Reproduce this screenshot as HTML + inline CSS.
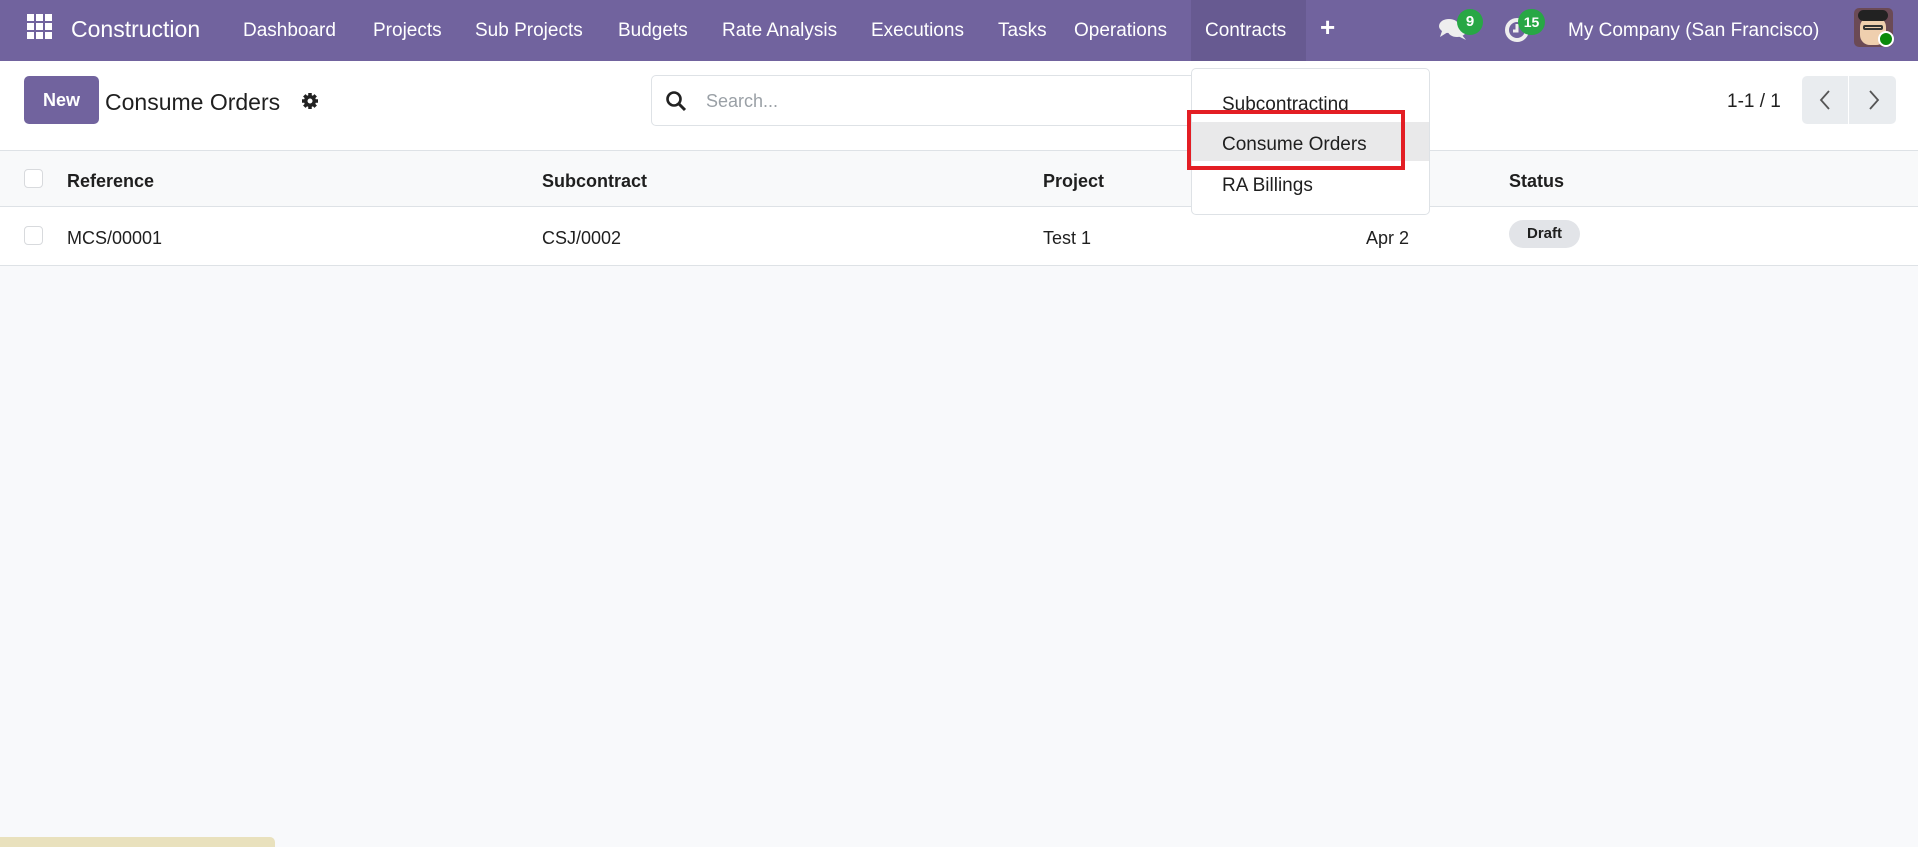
<!DOCTYPE html>
<html><head><meta charset="utf-8"><style>
*{box-sizing:border-box;margin:0;padding:0}
body{width:1918px;height:847px;overflow:hidden;background:#f8f9fb;font-family:"Liberation Sans",sans-serif;color:#1f1f1f;position:relative}
.a{position:absolute;white-space:nowrap}
.nav{position:absolute;left:0;top:0;width:1918px;height:61px;background:#71639e}
.nav .a{color:#fff;font-size:19px;top:20px}
.cp{position:absolute;left:0;top:61px;width:1918px;height:89px;background:#fff}
.hdr{position:absolute;left:0;top:150px;width:1918px;height:57px;background:#f8f9fa;border-top:1px solid #dee2e6;border-bottom:1px solid #dee2e6}
.row{position:absolute;left:0;top:207px;width:1918px;height:59px;background:#fff;border-bottom:1px solid #dee2e6}
.cb{position:absolute;width:19px;height:19px;border:1px solid #d8dadd;border-radius:4px;background:#fff}
.hdr .a{font-weight:bold;font-size:18px;top:20px}
.row .a{font-size:18px;top:21px}
</style></head><body>
<div class="nav">
<svg class="a" style="left:27px;top:14px" width="25" height="25" viewBox="0 0 25 25" fill="#fff"><rect x="0" y="0" width="7" height="7"/><rect x="9" y="0" width="7" height="7"/><rect x="18" y="0" width="7" height="7"/><rect x="0" y="9" width="7" height="7"/><rect x="9" y="9" width="7" height="7"/><rect x="18" y="9" width="7" height="7"/><rect x="0" y="18" width="7" height="7"/><rect x="9" y="18" width="7" height="7"/><rect x="18" y="18" width="7" height="7"/></svg>
<div class="a" style="left:71px;top:16px;font-size:23px">Construction</div>
<div class="a" style="left:243px">Dashboard</div>
<div class="a" style="left:373px">Projects</div>
<div class="a" style="left:475px">Sub Projects</div>
<div class="a" style="left:618px">Budgets</div>
<div class="a" style="left:722px">Rate Analysis</div>
<div class="a" style="left:871px">Executions</div>
<div class="a" style="left:998px">Tasks</div>
<div class="a" style="left:1074px">Operations</div>
<div style="position:absolute;left:1191px;top:0;width:115px;height:61px;background:#675a91"></div>
<div class="a" style="left:1205px">Contracts</div>
<div class="a" style="left:1320px;top:12px;font-size:26px;font-weight:bold">+</div>
<svg class="a" style="left:1438px;top:17px" width="30" height="24" viewBox="0 0 30 24" fill="#eee"><ellipse cx="11" cy="9" rx="10" ry="7"/><path d="M4 14 L2 20 L10 15Z"/><ellipse cx="19" cy="14" rx="9" ry="6"/><path d="M24 18 L28 23 L20 19Z"/></svg>
<div class="a" style="left:1457px;top:9px;width:26px;height:26px;border-radius:13px;background:#28a745;color:#fff;font-size:15px;font-weight:bold;text-align:center;line-height:26px">9</div>
<svg class="a" style="left:1504px;top:17px" width="26" height="26" viewBox="0 0 26 26"><circle cx="13" cy="13" r="10" fill="none" stroke="#eee" stroke-width="4"/><path d="M13 7 V14 H9" fill="none" stroke="#eee" stroke-width="3"/></svg>
<div class="a" style="left:1518px;top:9px;width:27px;height:26px;border-radius:13px;background:#28a745;color:#fff;font-size:14px;font-weight:bold;text-align:center;line-height:26px">15</div>
<div class="a" style="left:1568px">My Company (San Francisco)</div>
<div class="a" style="left:1854px;top:8px;width:39px;height:39px;border-radius:5px;background:#6b4a55;overflow:hidden"><div style="position:absolute;left:6px;top:9px;width:26px;height:28px;border-radius:10px;background:#efcfae"></div><div style="position:absolute;left:4px;top:2px;width:30px;height:11px;border-radius:6px;background:#222"></div><div style="position:absolute;left:9px;top:17px;width:20px;height:5px;border:2px solid #333;border-radius:2px"></div></div>
<div class="a" style="left:1878px;top:31px;width:16px;height:16px;border-radius:8px;background:#0a8a0a;border:2px solid #fff"></div>
</div>
<div class="cp">
<div class="a" style="left:24px;top:15px;width:75px;height:48px;border-radius:5px;background:#71639e;color:#fff;font-weight:bold;font-size:18px;text-align:center;line-height:48px">New</div>
<div class="a" style="left:105px;top:28px;font-size:23px">Consume Orders</div>
<svg class="a" style="left:301px;top:31px" width="18" height="18" viewBox="0 0 18 18"><circle cx="9" cy="9" r="6" fill="#222"/><g stroke="#222" stroke-width="3.5"><path d="M9 1V17M1 9H17M3.3 3.3L14.7 14.7M14.7 3.3L3.3 14.7"/></g><circle cx="9" cy="9" r="2.5" fill="#fff"/></svg>
<div class="a" style="left:651px;top:14px;width:700px;height:51px;border:1px solid #dee2e6;border-radius:5px;background:#fff"></div>
<svg class="a" style="left:665px;top:29px" width="22" height="22" viewBox="0 0 22 22"><circle cx="9" cy="9" r="6.5" fill="none" stroke="#222" stroke-width="2.6"/><path d="M14 14 L20 20" stroke="#222" stroke-width="3"/></svg>
<div class="a" style="left:706px;top:30px;font-size:18px;color:#9aa0a6">Search...</div>
<div class="a" style="left:1727px;top:30px;font-size:19px">1-1 / 1</div>
<div class="a" style="left:1802px;top:15px;width:94px;height:48px;border-radius:5px;background:#e9ecef"></div>
<div class="a" style="left:1848px;top:15px;width:1px;height:48px;background:#fff"></div>
<svg class="a" style="left:1816px;top:28px" width="20" height="22" viewBox="0 0 20 22"><path d="M13 2 L5 11 L13 20" fill="none" stroke="#555" stroke-width="1.8"/></svg>
<svg class="a" style="left:1863px;top:28px" width="20" height="22" viewBox="0 0 20 22"><path d="M7 2 L15 11 L7 20" fill="none" stroke="#555" stroke-width="1.8"/></svg>
</div>
<div class="hdr">
<div class="cb" style="left:24px;top:18px"></div>
<div class="a" style="left:67px">Reference</div>
<div class="a" style="left:542px">Subcontract</div>
<div class="a" style="left:1043px">Project</div>
<div class="a" style="left:1509px">Status</div>
</div>
<div class="row">
<div class="cb" style="left:24px;top:19px"></div>
<div class="a" style="left:67px">MCS/00001</div>
<div class="a" style="left:542px">CSJ/0002</div>
<div class="a" style="left:1043px">Test 1</div>
<div class="a" style="left:1366px">Apr 2</div>
<div class="a" style="left:1509px;top:13px;width:71px;height:28px;border-radius:14px;background:#e2e4e8;font-weight:bold;font-size:15px;text-align:center;line-height:28px">Draft</div>
</div>
<div class="a" style="left:1191px;top:68px;width:239px;height:147px;background:#fff;border:1px solid #dee2e6;border-radius:5px"></div>
<div class="a" style="left:1192px;top:122px;width:237px;height:39px;background:#e9e9ea"></div>
<div class="a" style="left:1222px;top:94px;font-size:19px">Subcontracting</div>
<div class="a" style="left:1222px;top:134px;font-size:19px">Consume Orders</div>
<div class="a" style="left:1222px;top:175px;font-size:19px">RA Billings</div>
<div class="a" style="left:1187px;top:110px;width:218px;height:60px;border:4px solid #e31e24"></div>
<div class="a" style="left:0;top:837px;width:275px;height:10px;background:#e9e1bd;border-radius:0 5px 0 0"></div>
</body></html>
